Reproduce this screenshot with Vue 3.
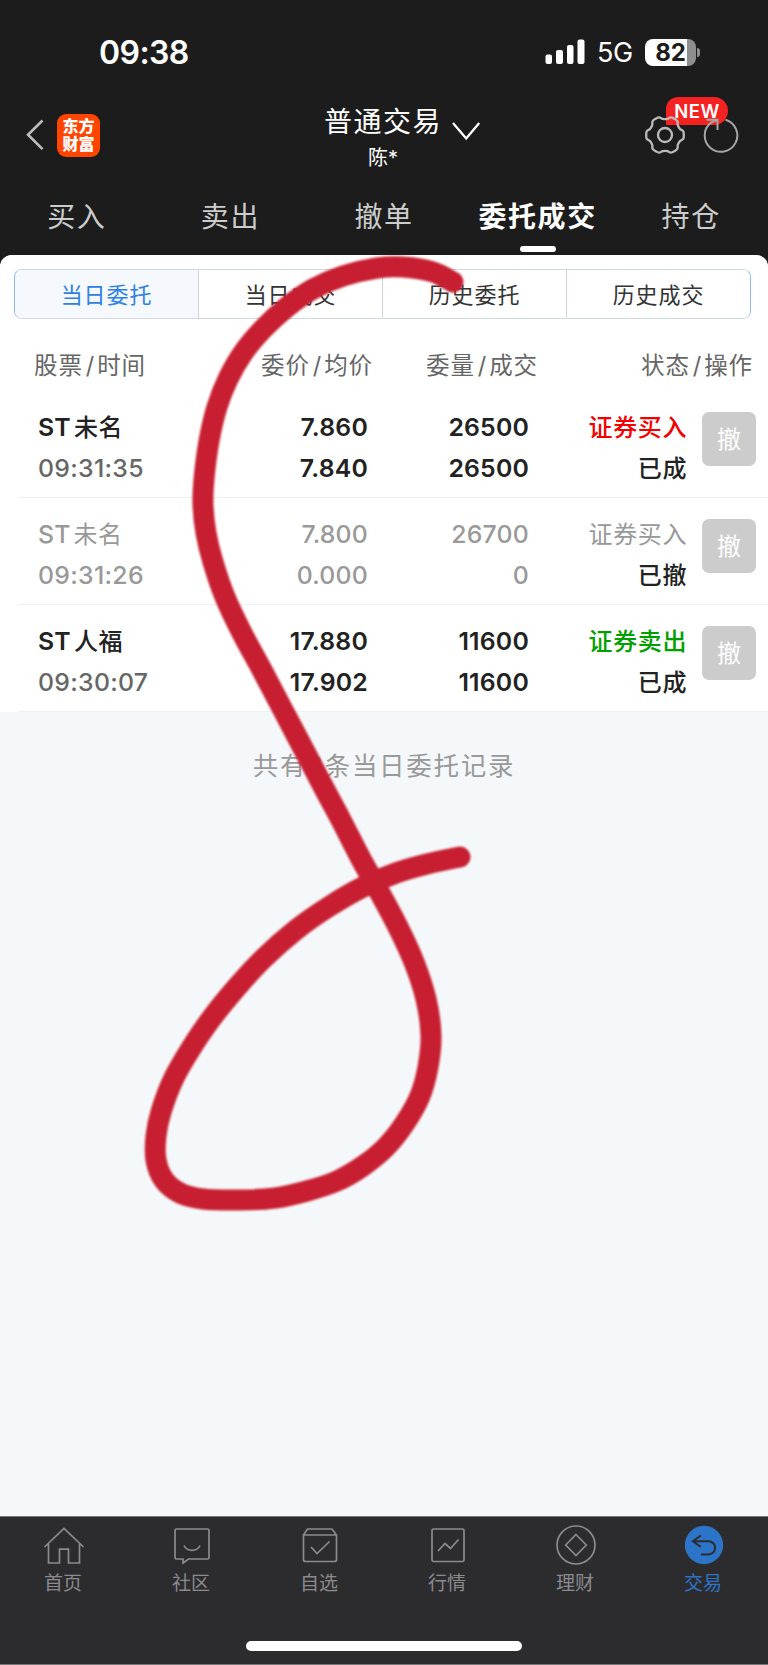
<!-- src/views/trade/OrderList.vue -->
<template>
  <div class="page">
    <header class="top">
      <div class="status">
        <span class="status__time">09:38</span>
        <div class="status__right">
          <svg class="signal" viewBox="0 0 40 26" width="40" height="26">
            <rect x="0.5" y="15.5" width="6.5" height="9.5" rx="2" />
            <rect x="11" y="11" width="7" height="14" rx="2" />
            <rect x="22" y="6" width="6.5" height="19" rx="2" />
            <rect x="32.5" y="0.5" width="7" height="24.5" rx="2" />
          </svg>
          <span class="status__net">5G</span>
          <span class="battery">82</span>
          <span class="battery-cap" />
        </div>
      </div>

      <div class="nav">
        <div class="nav__left">
          <svg class="back" viewBox="0 0 20 34" width="20" height="34">
            <path d="M17.5 2.5 3 16.8l14.500 14.300" />
          </svg>
          <div class="logo">
            <span>东方</span>
            <span>财富</span>
          </div>
        </div>
        <div class="nav__title">
          <div class="account">
            <span class="account__type">普通交易</span>
            <span class="account__name">陈*</span>
          </div>
          <svg class="arrow" viewBox="0 0 30 20" width="30" height="20">
            <path d="M2 2 15.200 17.500 28.200 2" />
          </svg>
        </div>
        <div class="nav__right">
          <span class="badge">NEW</span>
          <svg class="gear" viewBox="-20 -20 40 40" width="40" height="40">
            <path :d="gearPath" />
            <circle r="7" />
          </svg>
          <svg class="refresh" viewBox="0 0 38 42" width="38" height="42">
            <path d="M23.500 5.800A16.300 16.300 0 1 1 9 8.600L15.500 5.800" />
            <path d="M4.500 5.800H15.500V16" />
          </svg>
        </div>
      </div>

      <nav class="tabs">
        <div
          v-for="tab in tabs"
          :key="tab"
          class="tab"
          :class="{ 'tab--active': activeTab === tab }"
          @click="activeTab = tab"
        >
          <span class="tab__text">{{ tab }}</span>
          <span class="tab__line" />
        </div>
      </nav>
    </header>

    <main class="content">
      <section class="sheet">
        <div class="segment">
          <button
            v-for="item in segments"
            :key="item"
            type="button"
            class="segment__item"
            :class="{ 'segment__item--active': activeSegment === item }"
            @click="activeSegment = item"
          >
            {{ item }}
          </button>
        </div>

        <div class="thead">
          <span v-for="h in heads" :key="h[0]">{{ h[0] }}<i>/</i>{{ h[1] }}</span>
        </div>

        <ul class="orders">
          <li
            v-for="order in orders"
            :key="order.time"
            class="order"
            :class="{ 'order--cancelled': order.cancelled }"
          >
            <div class="cell cell--name">
              <span>ST<b>{{ order.name }}</b></span>
              <span class="order__time">{{ order.time }}</span>
            </div>
            <div class="cell">
              <span>{{ order.price }}</span>
              <span>{{ order.avg }}</span>
            </div>
            <div class="cell">
              <span>{{ order.qty }}</span>
              <span>{{ order.filled }}</span>
            </div>
            <div class="cell cell--status">
              <span :class="'side--' + order.side">{{ order.sideText }}</span>
              <span class="order__state">{{ order.state }}</span>
            </div>
            <button type="button" class="cancel" disabled>撤</button>
          </li>
        </ul>
      </section>
      <p class="total">共有{{ orders.length }}条当日委托记录</p>
    </main>

    <footer class="bottom">
      <div class="menu">
        <div class="menu__item">
          <svg viewBox="0 0 44 44" width="44" height="44">
            <path d="M2.500 24 22 5.500 41.500 24M6.500 21V40H17.500V26.200H26.500V40H37.500V21" />
          </svg>
          <span>首页</span>
        </div>
        <div class="menu__item">
          <svg viewBox="0 0 44 44" width="44" height="44">
            <path d="M6.500 6H37.500Q39 6 39 7.500V34.500Q39 36 37.500 36H18.500L13 40V36H6.500Q5 36 5 34.500V7.500Q5 6 6.500 6Z" />
            <path d="M14 22.500C17 29 27 29 30 22.500" />
          </svg>
          <span>社区</span>
        </div>
        <div class="menu__item">
          <svg viewBox="0 0 44 44" width="44" height="44">
            <path d="M5.500 12 9.500 6H34L38.500 12V36.500Q38.500 38.500 36.500 38.500H7.500Q5.500 38.500 5.500 36.500ZM5.500 12H38.500M13 24 19 30.500 31.500 18.500" />
          </svg>
          <span>自选</span>
        </div>
        <div class="menu__item">
          <svg viewBox="0 0 44 44" width="44" height="44">
            <rect x="6" y="6" width="32" height="32.500" rx="1.500" />
            <path d="M12 28 19 20.500 24.500 25.500 32.500 16.500" />
          </svg>
          <span>行情</span>
        </div>
        <div class="menu__item">
          <svg viewBox="0 0 44 44" width="44" height="44">
            <circle cx="22" cy="22" r="19" />
            <path d="M22 11.500 32.300 22 22 32.500 11.700 22Z" />
          </svg>
          <span>理财</span>
        </div>
        <div class="menu__item menu__item--active">
          <svg viewBox="0 0 44 44" width="44" height="44">
            <circle cx="22" cy="22" r="19.200" />
            <path d="M18.800 12.500 11 18.200 18.800 24M11 18.200H26C35.500 18.200 35.500 31.500 26 31.500H19" />
          </svg>
          <span>交易</span>
        </div>
      </div>
      <div class="home-bar" />
    </footer>

    <svg class="doodle" viewBox="0 0 768 1665" width="768" height="1665">
      <path :d="doodlePath" />
    </svg>
  </div>
</template>

<script setup>
import { ref } from 'vue'

const tabs = ['买入', '卖出', '撤单', '委托成交', '持仓']
const activeTab = ref('委托成交')

const segments = ['当日委托', '当日成交', '历史委托', '历史成交']
const activeSegment = ref('当日委托')

const heads = [
  ['股票', '时间'],
  ['委价', '均价'],
  ['委量', '成交'],
  ['状态', '操作'],
]

const orders = [
  { name: '未名', time: '09:31:35', price: '7.860', avg: '7.840', qty: 26500, filled: 26500, side: 'buy', sideText: '证券买入', state: '已成' },
  { name: '未名', time: '09:31:26', price: '7.800', avg: '0.000', qty: 26700, filled: 0, side: 'buy', sideText: '证券买入', state: '已撤', cancelled: true },
  { name: '人福', time: '09:30:07', price: '17.880', avg: '17.902', qty: 11600, filled: 11600, side: 'sell', sideText: '证券卖出', state: '已成' },
]

// smooth curve through a list of points
const smooth = (pts, closed = false) => {
  const n = pts.length
  const at = (i) => (closed ? pts[(i + n) % n] : pts[Math.max(0, Math.min(n - 1, i))])
  let d = `M${pts[0][0]} ${pts[0][1]}`
  for (let i = 0; i < (closed ? n : n - 1); i++) {
    const [a, b, c, e] = [at(i - 1), at(i), at(i + 1), at(i + 2)]
    d += `C${b[0] + (c[0] - a[0]) / 6} ${b[1] + (c[1] - a[1]) / 6} `
    d += `${c[0] - (e[0] - b[0]) / 6} ${c[1] - (e[1] - b[1]) / 6} ${c[0]} ${c[1]}`
  }
  return closed ? d + 'Z' : d
}

// six wide teeth with shallow notches between them
const gearPoints = []
for (let i = 0; i < 6; i++) {
  const teeth = [[-12, 18.6], [0, 18.8], [12, 18.6], [22, 16.2], [38, 16.2]]
  for (const [deg, r] of teeth) {
    const t = ((i * 60 + deg) * Math.PI) / 180
    gearPoints.push([r * Math.cos(t), r * Math.sin(t)])
  }
}
const gearPath = smooth(gearPoints, true)

const doodlePath = smooth([
  [453, 282], [433, 272], [403, 267], [377, 268], [343, 276], [313, 289],
  [287, 307], [263, 329], [243, 353], [228, 379], [217, 407], [209, 441],
  [204, 479], [203, 505], [206, 533], [213, 562], [225, 597], [242, 633],
  [262, 670], [283, 710], [304, 750], [325, 790], [341, 820], [361, 859],
  [375, 884], [397, 925], [414, 962], [426, 999], [431, 1035], [428, 1067],
  [420, 1096], [405, 1123], [386, 1147], [363, 1166], [337, 1181], [307, 1191],
  [275, 1198], [240, 1200], [203, 1199], [180, 1193], [164, 1180], [156, 1160],
  [156, 1136], [161, 1112], [173, 1080], [190, 1050], [211, 1019], [237, 987],
  [264, 958], [297, 929], [330, 906], [363, 887], [396, 873], [427, 864],
  [460, 857],
])
</script>

<style>
body {
  margin: 0;
  background: #f5f8fa;
}
</style>

<style scoped>
.page {
  position: relative;
  width: 768px;
  height: 1665px;
  display: flex;
  flex-direction: column;
  overflow: hidden;
  background: #1c1c1c;
  font-family: Inter, "Noto Sans CJK SC", sans-serif;
  color: #222222;
}

.top {
  height: 255px;
  flex-shrink: 0;
}

/* status bar */
.status {
  height: 96px;
  box-sizing: border-box;
  padding: 34px 68px 0 99px;
  display: flex;
  justify-content: space-between;
  color: #ffffff;
}

.status__time {
  font-size: 32px;
  line-height: 38px;
  font-weight: 600;
  letter-spacing: -0.6px;
}

.status__right {
  height: 36px;
  display: flex;
  align-items: center;
}

.signal {
  fill: #ffffff;
}

.status__net {
  width: 48px;
  margin-left: 12px;
  font-size: 27px;
  line-height: 36px;
  padding-top: 2px;
  letter-spacing: -0.5px;
}

.battery {
  width: 51px;
  height: 27px;
  border-radius: 8px;
  background: linear-gradient(to right, #ffffff 42px, #8e8e8e 42px);
  color: #1c1c1c;
  font-size: 24px;
  line-height: 28px;
  font-weight: 700;
  text-align: center;
}

.battery-cap {
  width: 3px;
  height: 9px;
  margin-left: 1px;
  border-radius: 0 4px 4px 0;
  background: #8e8e8e;
}

/* title bar */
.nav {
  height: 78px;
  display: flex;
  align-items: center;
}

.nav__left {
  width: 324px;
  display: flex;
  align-items: center;
}

.back {
  margin-left: 25px;
  fill: none;
  stroke: #bdbdbd;
  stroke-width: 2.6;
}

.logo {
  width: 43px;
  height: 43px;
  margin-left: 12px;
  border-radius: 9px;
  background: #ff4500;
  color: #ffffff;
  display: flex;
  flex-direction: column;
  align-items: center;
  justify-content: center;
  font-size: 16px;
  line-height: 18px;
  font-weight: 900;
}

.nav__title {
  width: 320px;
  display: flex;
  align-items: center;
}

.account {
  display: flex;
  flex-direction: column;
  align-items: center;
  padding-top: 6px;
  color: #ffffff;
}

.account__type {
  font-size: 28px;
  line-height: 38px;
  letter-spacing: 1.5px;
}

.account__name {
  font-size: 20px;
  line-height: 30px;
  padding-top: 2px;
}

.arrow {
  margin-left: 9px;
  margin-top: -9px;
  fill: none;
  stroke: #ffffff;
  stroke-width: 2.3;
}

.nav__right {
  position: relative;
  display: flex;
  align-items: center;
}

.gear,
.refresh {
  position: relative;
  fill: none;
  stroke: #bbbbbb;
  stroke-width: 2.3;
}

.gear {
  margin-left: 1px;
}

.refresh {
  margin-left: 17px;
  stroke: #a6a6a6;
  stroke-width: 2;
}

.badge {
  position: absolute;
  left: 22px;
  top: -17px;
  width: 62px;
  height: 28px;
  border-radius: 12px 14px 14px 0;
  background: #f52222;
  color: #ffffff;
  font-size: 18.5px;
  line-height: 28px;
  font-weight: 600;
  letter-spacing: 0.5px;
  text-align: center;
}

/* main tabs */
.tabs {
  height: 81px;
  display: flex;
}

.tab {
  flex: 1;
  display: flex;
  flex-direction: column;
  align-items: center;
  padding-top: 23px;
  color: #cccccc;
}

.tab__text {
  font-size: 28px;
  line-height: 40px;
  letter-spacing: 1.6px;
  white-space: nowrap;
}

.tab__line {
  width: 36px;
  height: 6px;
  margin-top: 9px;
  border-radius: 3px;
}

.tab--active {
  color: #ffffff;
  font-weight: 700;
}

.tab--active .tab__line {
  background: #ffffff;
}

.content {
  flex: 1;
  border-radius: 12px 12px 0 0;
  background: #f5f8fa;
  overflow: hidden;
}

.sheet {
  height: 457px;
  padding-top: 14px;
  box-sizing: border-box;
  background: #ffffff;
}

.segment {
  height: 50px;
  margin: 0 17px 0 14px;
  display: flex;
  border: 1px solid #cfd8e3;
  border-left-color: #8fb7ef;
  border-right-color: #8fb7ef;
  border-radius: 8px;
  box-sizing: border-box;
  overflow: hidden;
}

.segment__item {
  flex: 1;
  padding: 0 0 3px;
  border: none;
  border-left: 1px solid #cfd5dd;
  background: #ffffff;
  color: #333333;
  font-family: inherit;
  font-size: 22px;
  letter-spacing: 0.9px;
}

.segment__item:first-child {
  border-left: none;
}

.segment__item--active {
  background: #f5f8fd;
  color: #2f80e5;
}

/* table */
.thead {
  height: 72px;
  padding: 21px 15px 0 34px;
  box-sizing: border-box;
  display: grid;
  grid-template-columns: 120px 219px 165px 1fr;
  align-items: center;
  text-align: right;
  color: #666666;
  font-size: 23.5px;
  line-height: 36px;
  letter-spacing: 0.9px;
}

.thead span:first-child {
  text-align: left;
}

.thead i {
  margin: 0 2px 0 3px;
  font-style: normal;
}

.orders {
  list-style: none;
  margin: 0;
  padding: 0;
}

.order {
  height: 107px;
  margin-left: 18px;
  padding: 16px 12px 0 20px;
  box-sizing: border-box;
  border-bottom: 1px solid #eef0f2;
  display: grid;
  grid-template-columns: 120px 210px 161px 158px 1fr;
  align-items: start;
  font-size: 24.8px;
  font-weight: 600;
  letter-spacing: 0.2px;
}

.cell {
  display: flex;
  flex-direction: column;
  text-align: right;
  line-height: 41px;
}

.cell--name {
  text-align: left;
}

.cell--name b {
  margin-left: 3px;
  font-size: 24px;
  font-weight: 500;
  letter-spacing: 0.5px;
}

.cell--status {
  font-size: 24px;
  font-weight: 500;
  letter-spacing: 0.6px;
}

.order__time {
  color: #666666;
  font-weight: 500;
  letter-spacing: 0.3px;
}

.side--buy {
  color: #f40000;
}

.side--sell {
  color: #00a000;
}

.order--cancelled,
.order--cancelled .order__time,
.order--cancelled .side--buy {
  color: #999999;
  font-weight: 500;
}

.order--cancelled .cell--name b,
.order--cancelled .side--buy {
  font-weight: 400;
}

.order--cancelled .order__state {
  color: #222222;
}

.cancel {
  width: 54px;
  height: 54px;
  margin-top: 5px;
  padding: 0 0 4px;
  justify-self: end;
  border: none;
  border-radius: 7px;
  background: #cccccc;
  color: #ffffff;
  font-family: inherit;
  font-size: 24px;
}

.total {
  margin: 34px 0 0;
  text-align: center;
  color: #999999;
  font-size: 25.500px;
  line-height: 40px;
  letter-spacing: 1.7px;
}

/* bottom menu */
.bottom {
  height: 149px;
  flex-shrink: 0;
  box-sizing: border-box;
  border-top: 1px solid #77777a;
  border-bottom: 1px solid #77777a;
  background: #2c2c2e;
}

.menu {
  height: 124px;
  display: flex;
}

.menu__item {
  flex: 1;
  display: flex;
  flex-direction: column;
  align-items: center;
  padding-top: 6px;
  color: #8b8a8f;
  font-size: 19px;
  line-height: 30px;
}

.menu__item svg {
  fill: none;
  stroke: #8b8a8f;
  stroke-width: 1.7;
  margin-bottom: 2px;
}

.menu__item span {
  padding-right: 2px;
}

.menu__item--active {
  color: #2c74c8;
}

.menu__item--active circle {
  fill: #2c74c8;
  stroke: none;
}

.menu__item--active path {
  stroke: #2c2c2e;
  stroke-width: 2;
}

.home-bar {
  width: 276px;
  height: 10px;
  margin: 0 auto;
  border-radius: 5px;
  background: #ffffff;
}

/* hand drawn mark over the page */
.doodle {
  position: absolute;
  left: 0;
  top: 0;
  pointer-events: none;
}

.doodle path {
  fill: none;
  stroke: #c71f31;
  stroke-width: 21;
  stroke-linecap: round;
  stroke-linejoin: round;
  filter: blur(0.8px);
}
</style>
